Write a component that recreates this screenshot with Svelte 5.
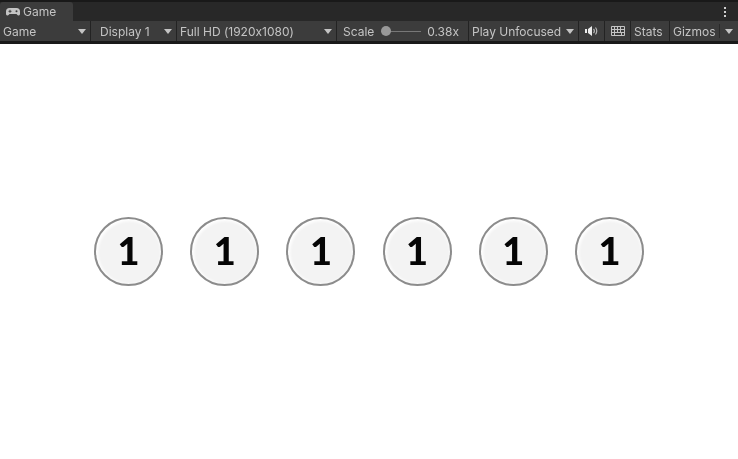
<script lang="ts">
	const toolbar = [
		{ label: 'Game', width: 90, cls: 'first' },
		{ label: 'Display 1', width: 85, cls: 'center' },
		{ label: 'Full HD (1920x1080)', width: 159, cls: '' }
	];
	const tokens = [1, 1, 1, 1, 1, 1];
</script>

<div class="window">
	<header class="tabs">
		<div class="tab">
			<svg class="pad" viewBox="0 0 14 8" width="14" height="8" aria-hidden="true">
				<path d="M3.500 0h7a3.500 3.500 0 0 1 3.500 3.500V6a1.500 1.500 0 0 1-2.800.7L10.500 6h-7l-.7.7A1.500 1.500 0 0 1 0 6V3.500A3.500 3.500 0 0 1 3.500 0z" fill="#c4c4c4" />
				<rect x="2.500" y="2.800" width="3" height="1" fill="#3c3c3c" />
				<rect x="3.500" y="1.800" width="1" height="3" fill="#3c3c3c" />
				<circle cx="10.500" cy="3.300" r="1" fill="#3c3c3c" />
			</svg>
			<span>Game</span>
		</div>
		<div class="kebab"><i></i><i></i><i></i></div>
	</header>

	<nav class="toolbar">
		{#each toolbar as item}
			<div class="cell {item.cls}" style:width="{item.width}px">
				<span>{item.label}</span>
				<b class="arrow"></b>
			</div>
		{/each}
		<div class="cell scale">
			<span>Scale</span>
			<div class="slider"><em></em></div>
			<span>0.38x</span>
		</div>
		<div class="cell play">
			<span>Play Unfocused</span>
			<b class="arrow"></b>
		</div>
		<div class="cell icon mute">
			<svg viewBox="0 0 13 10" width="13" height="10" aria-hidden="true">
				<path d="M0 3h2v4H0zM3 3l4-3v10L3 7z" fill="#ececec" />
				<path d="M8.500 3a3 3 0 0 1 0 4M10.500 1.500a6 6 0 0 1 0 7" fill="none" stroke="#b8b8b8" stroke-width="1.200" />
			</svg>
		</div>
		<div class="cell icon keys">
			<svg viewBox="0 0 14 10" width="14" height="10" aria-hidden="true">
				<path d="M.5.500h13v9H.5zM.5 3.500h13M.5 6.500h13M3.500.500v6M6.500.500v6M9.500.500v6M3.500 6.500v3M10.500 6.500v3" fill="none" stroke="#c4c4c4" stroke-width="1" />
			</svg>
		</div>
		<div class="cell stats"><span>Stats</span></div>
		<div class="cell gizmos">
			<span>Gizmos</span>
			<u class="divider"></u>
			<b class="arrow"></b>
		</div>
	</nav>

	<main class="stage">
		{#each tokens as n}
			<div class="token">{n}</div>
		{/each}
	</main>
</div>

<style>
	:global(body) {
		background: #fff;
	}

	.window {
		width: 738px;
		height: 459px;
		overflow: hidden;
		display: flex;
		flex-direction: column;
		font-family: Inter, 'Liberation Sans', sans-serif;
		font-size: 12px;
		font-feature-settings: 'calt' 0;
		color: #c4c4c4;
		background: #fff;
	}

	.tabs {
		height: 19px;
		padding-top: 2px;
		flex: none;
		display: flex;
		justify-content: space-between;
		background: #282828;
		box-shadow: inset 0 2px 0 #191919;
	}

	.tab {
		width: 73px;
		display: flex;
		align-items: center;
		gap: 3px;
		padding-left: 6px;
		box-sizing: border-box;
		background: #3c3c3c;
		border-radius: 3px 3px 0 0;
	}

	.tab span,
	.cell span {
		filter: blur(0.3px);
	}

	.kebab {
		width: 26px;
		display: flex;
		flex-direction: column;
		align-items: center;
		justify-content: center;
		gap: 2px;
	}

	.kebab i {
		width: 2px;
		height: 2px;
		background: #d0d0d0;
	}

	.toolbar {
		height: 20px;
		flex: none;
		display: flex;
		gap: 1px;
		background: #232323;
		border-bottom: 3px solid #191919;
	}

	.cell {
		flex: none;
		display: flex;
		align-items: center;
		justify-content: space-between;
		box-sizing: border-box;
		padding: 0 4px 0 3px;
		background: #3c3c3c;
		white-space: nowrap;
	}

	.center {
		padding-left: 9px;
	}

	.arrow {
		width: 0;
		height: 0;
		border-left: 4px solid transparent;
		border-right: 4px solid transparent;
		border-top: 5px solid #c4c4c4;
	}

	.scale {
		width: 131px;
		padding: 0 9px 0 6px;
	}

	.slider {
		position: relative;
		width: 40px;
		height: 1px;
		background: #777;
	}

	.slider em {
		position: absolute;
		left: 0;
		top: -5px;
		width: 10px;
		height: 10px;
		border-radius: 50%;
		background: #999;
	}

	.play {
		width: 109px;
	}

	.icon {
		justify-content: center;
		padding: 0;
	}

	.mute,
	.keys {
		width: 25px;
	}

	.stats {
		width: 38px;
	}

	.gizmos {
		flex: 1;
		justify-content: flex-start;
		padding-right: 5px;
	}

	.divider {
		width: 1px;
		height: 14px;
		margin: 0 5px 0 auto;
		background: #2a2a2a;
	}

	.stage {
		flex: 1;
		display: flex;
		align-items: center;
		justify-content: center;
		gap: 27.2px;
	}

	.token {
		width: 69px;
		height: 69px;
		box-sizing: border-box;
		padding-bottom: 3px;
		border-radius: 50%;
		border: 2px solid #8c8c8c;
		background: #f3f3f3;
		box-shadow: inset 1px 1px 3px 1px #fff;
		display: flex;
		align-items: center;
		justify-content: center;
		filter: blur(0.4px);
		font-family: Lato, sans-serif;
		font-size: 38px;
		font-weight: 900;
		line-height: 1;
		color: #050505;
	}
</style>
